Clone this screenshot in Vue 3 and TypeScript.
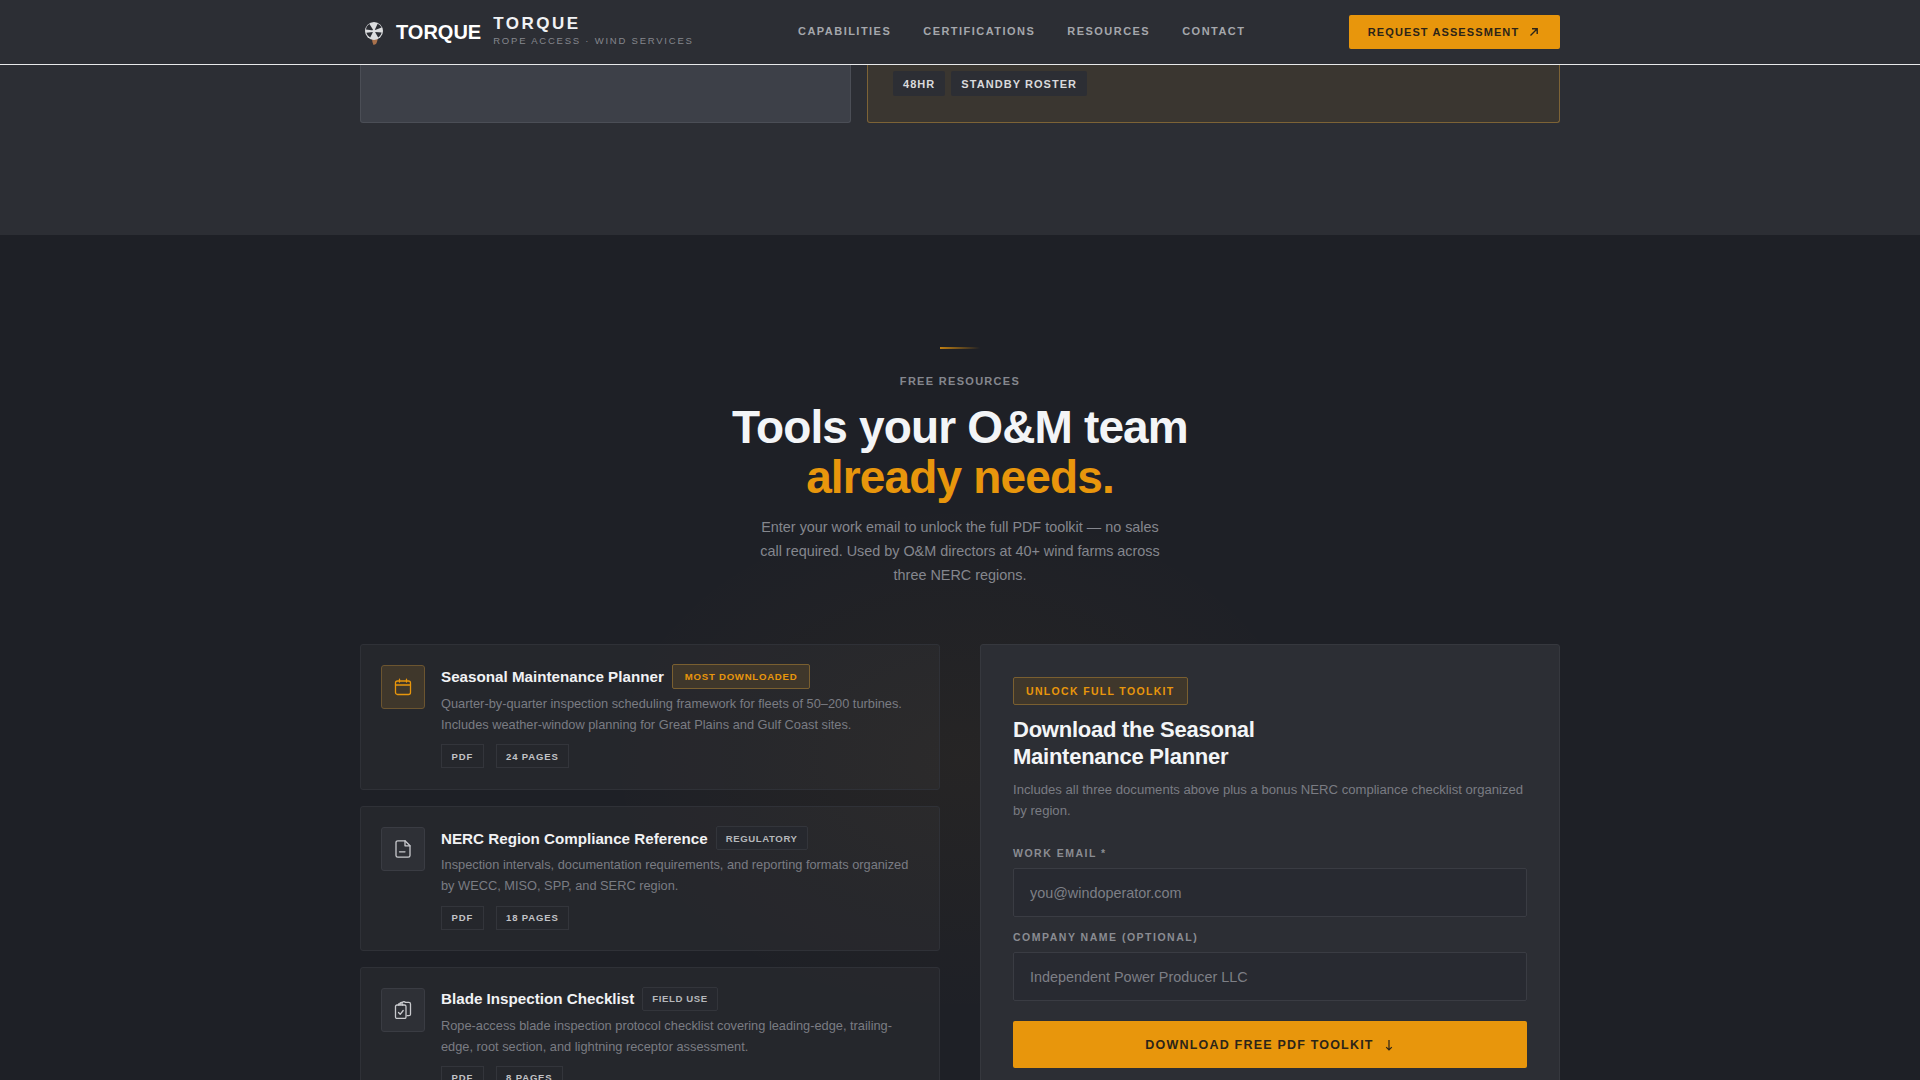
<script setup lang="ts">
interface Resource {
  title: string
  badge: string
  featured?: boolean
  icon: 'calendar' | 'file' | 'clipboard'
  desc: string
  pages: string
}

const navLinks = ['Capabilities', 'Certifications', 'Resources', 'Contact']

const resources: Resource[] = [
  {
    title: 'Seasonal Maintenance Planner',
    badge: 'Most Downloaded',
    featured: true,
    icon: 'calendar',
    desc: 'Quarter-by-quarter inspection scheduling framework for fleets of 50–200 turbines. Includes weather-window planning for Great Plains and Gulf Coast sites.',
    pages: '24 Pages',
  },
  {
    title: 'NERC Region Compliance Reference',
    badge: 'Regulatory',
    icon: 'file',
    desc: 'Inspection intervals, documentation requirements, and reporting formats organized by WECC, MISO, SPP, and SERC region.',
    pages: '18 Pages',
  },
  {
    title: 'Blade Inspection Checklist',
    badge: 'Field Use',
    icon: 'clipboard',
    desc: 'Rope-access blade inspection protocol checklist covering leading-edge, trailing-edge, root section, and lightning receptor assessment.',
    pages: '8 Pages',
  },
]
</script>

<template>
  <div class="page">
    <header class="header">
      <div class="container header-row">
        <div class="brand">
          <svg class="brand-mark" width="20" height="26" viewBox="0 0 20 26">
            <path d="M8 18c0 3 .6 5 1.6 7l2.4-1c1.2-2 1.6-4 1.6-6z" fill="#a8714c" />
            <circle cx="10" cy="11" r="9" fill="#dcdddf" />
            <path d="M9.6 10.4 5.4 4C3.6 5 2.2 7 2 9.4ZM10.6 10.2 17.6 7.6C16.8 6 15.4 4.6 13.6 3.8ZM11 12l6.6.6c-.4 2-1.6 3.8-3.4 4.8ZM9 12l-6.6.8c.6 2 2 3.6 3.8 4.6Z" fill="#2b2d33" />
            <circle cx="10" cy="11" r="1.7" fill="#dcdddf" />
          </svg>
          <span class="brand-alt">TORQUE</span>
          <div class="brand-text">
            <div class="brand-name">TORQUE</div>
            <div class="brand-sub">Rope Access · Wind Services</div>
          </div>
        </div>
        <nav class="nav">
          <a v-for="link in navLinks" :key="link">{{ link }}</a>
        </nav>
        <button type="button" class="cta">
          Request Assessment
          <svg width="10" height="10" viewBox="0 0 10 10" fill="none" stroke="currentColor" stroke-width="1.4">
            <path d="M1.5 8.5 8 2M3 1.8h5.2V7" />
          </svg>
        </button>
      </div>
    </header>

    <section class="upper">
      <div class="container upper-row">
        <div class="upper-card"></div>
        <div class="upper-card upper-card-amber">
          <span class="chip">48HR</span>
          <span class="chip">Standby Roster</span>
        </div>
      </div>
    </section>

    <section class="resources">
      <div class="container">
        <div class="intro">
          <div class="rule"></div>
          <div class="eyebrow">Free Resources</div>
          <h2>Tools your O&amp;M team <span>already needs.</span></h2>
          <p>Enter your work email to unlock the full PDF toolkit — no sales call required. Used by O&amp;M directors at 40+ wind farms across three NERC regions.</p>
        </div>

        <div class="grid">
          <div class="list">
            <article v-for="item in resources" :key="item.title" class="card">
              <div class="icon" :class="{ 'icon-amber': item.featured }">
                <svg width="18" height="18" viewBox="0 0 18 18" fill="none" stroke="currentColor" stroke-width="1.3" stroke-linecap="round" stroke-linejoin="round">
                  <template v-if="item.icon === 'calendar'">
                    <rect x="1.5" y="3" width="15" height="13.5" rx="2" />
                    <path d="M1.5 7h15M5.5 1.2V4M12.5 1.2V4" />
                  </template>
                  <template v-else-if="item.icon === 'file'">
                    <path d="M3.8.8h7.2l5 5v9.6a1.8 1.8 0 0 1-1.8 1.8H3.8A1.8 1.8 0 0 1 2 15.400V2.600A1.800 1.800 0 0 1 3.800.8Z" />
                    <path d="M11 .8v5h5M5.500 11.800h5.500" />
                  </template>
                  <template v-else>
                    <path d="M6 3.500V2.600C6 1.800 6.600 1.400 7.400 1.400H8.500C9 .4 10.800.4 11.300 1.400h3.500c1 0 1.700.6 1.700 1.600v10.200c0 1-.7 1.500-1.700 1.500H13" />
                    <rect x="1.500" y="4" width="10.500" height="13.500" rx="1.500" />
                    <path d="M4.500 11.500l1.700 1.800 3-3.800M4.600 4V2.900h4v1.100" />
                  </template>
                </svg>
              </div>
              <div class="card-body">
                <div class="card-head">
                  <h3>{{ item.title }}</h3>
                  <span class="badge" :class="{ 'badge-amber': item.featured }">{{ item.badge }}</span>
                </div>
                <p>{{ item.desc }}</p>
                <div class="meta">
                  <span>PDF</span>
                  <span>{{ item.pages }}</span>
                </div>
              </div>
            </article>
          </div>

          <form class="panel" @submit.prevent>
            <span class="unlock">Unlock Full Toolkit</span>
            <h3>Download the Seasonal Maintenance Planner</h3>
            <p>Includes all three documents above plus a bonus NERC compliance checklist organized by region.</p>
            <label for="email">Work Email *</label>
            <input id="email" type="email" placeholder="you@windoperator.com" />
            <label for="company">Company Name (Optional)</label>
            <input id="company" type="text" placeholder="Independent Power Producer LLC" />
            <button type="submit" class="download">
              Download Free PDF Toolkit
              <svg width="12" height="14" viewBox="0 0 12 14" fill="none" stroke="currentColor" stroke-width="1.2">
                <path d="M6 2v10M3.2 9.2 6 12l2.8-2.8" />
              </svg>
            </button>
          </form>
        </div>
      </div>
    </section>
  </div>
</template>

<style scoped>
.page {
  height: 1080px;
  overflow: hidden;
  font-family: "Liberation Sans", Arial, sans-serif;
  color: #f1f2f4;
  background: #2c2e34;
}

.container {
  width: 1200px;
  margin: 0 auto;
}

.header {
  height: 64px;
  background: #2c2e34;
  border-bottom: 1px solid #e8e9ea;
}

.header-row {
  height: 100%;
  display: flex;
  align-items: center;
}

.brand {
  display: flex;
  align-items: center;
  width: 438px;
  padding-left: 4px;
  box-sizing: border-box;
}

.brand-mark {
  margin-top: 2px;
}

.brand-alt {
  margin-left: 12px;
  font-size: 20px;
  font-weight: 700;
  color: #fff;
}

.brand-text {
  margin-left: 12px;
  margin-top: -3px;
}

.brand-name {
  margin-bottom: 1px;
  font-size: 17px;
  font-weight: 700;
  letter-spacing: 2.5px;
  line-height: 20px;
  color: #f1f2f4;
}

.brand-sub {
  font-size: 9.5px;
  letter-spacing: 1.78px;
  line-height: 12px;
  text-transform: uppercase;
  color: #85878d;
}

.nav {
  display: flex;
  gap: 32px;
  margin-top: -2px;
}

.nav a {
  font-size: 11px;
  font-weight: 700;
  letter-spacing: 1.47px;
  text-transform: uppercase;
  color: #a5a7ac;
}

.cta {
  margin-left: auto;
  height: 34px;
  width: 211px;
  padding: 0 2px 0 0;
  display: flex;
  align-items: center;
  justify-content: center;
  gap: 10px;
  border: none;
  border-radius: 2px;
  background: #e8960c;
  color: #2c2418;
  font-family: inherit;
  font-size: 11px;
  font-weight: 700;
  letter-spacing: 1.1px;
  text-transform: uppercase;
}

.upper {
  height: 170px;
}

.upper-row {
  display: grid;
  grid-template-columns: 491px 693px;
  gap: 16px;
}

.upper-card {
  height: 58px;
  box-sizing: border-box;
  background: #3d4048;
  border: 1px solid #4b4e56;
  border-top: none;
  border-radius: 0 0 3px 3px;
}

.upper-card-amber {
  display: flex;
  gap: 6px;
  padding: 6px 25px 0;
  background: #3a3630;
  border-color: #7d6336;
}

.chip {
  height: 25px;
  padding: 0 10px;
  display: flex;
  align-items: center;
  background: #2c2e34;
  border-radius: 2px;
  font-size: 11px;
  font-weight: 700;
  letter-spacing: 1.05px;
  text-transform: uppercase;
  color: #d9dadc;
}

.resources {
  height: 845px;
  padding-top: 112px;
  box-sizing: border-box;
  background:
    radial-gradient(ellipse 360px 260px at 50% 62%, rgba(232, 150, 12, 0.04), transparent 100%),
    #1e2026;
}

.intro {
  display: flex;
  flex-direction: column;
  align-items: center;
  text-align: center;
}

.rule {
  width: 40px;
  height: 2px;
  background: linear-gradient(90deg, rgba(232, 150, 12, 0.8), transparent);
}

.eyebrow {
  margin-top: 25px;
  font-size: 11px;
  font-weight: 700;
  letter-spacing: 1.3px;
  line-height: 14px;
  text-transform: uppercase;
  color: #85878e;
}

.intro h2 {
  margin: 14px 0 0;
  width: 600px;
  font-size: 46px;
  font-weight: 700;
  letter-spacing: -0.85px;
  line-height: 50px;
  color: #f3f5f7;
}

.intro h2 span {
  display: block;
  color: #e8960c;
}

.intro p {
  margin: 13px 0 0;
  width: 420px;
  font-size: 14.4px;
  line-height: 24px;
  color: #85878e;
}

.grid {
  margin-top: 57px;
  display: grid;
  grid-template-columns: 580px 580px;
  gap: 40px;
}

.list {
  display: flex;
  flex-direction: column;
  gap: 16px;
}

.card {
  display: flex;
  gap: 16px;
  padding: 20px;
  background: rgba(255, 255, 255, 0.03);
  border: 1px solid #2f3137;
  border-radius: 3px;
}

.card:first-child {
  padding-bottom: 21px;
}

.icon {
  flex: none;
  width: 44px;
  height: 44px;
  display: flex;
  align-items: center;
  justify-content: center;
  box-sizing: border-box;
  background: #2e3036;
  border: 1px solid #3a3c43;
  border-radius: 3px;
  color: #c9cace;
}

.icon-amber {
  background: #3f372b;
  border-color: #6c5530;
  color: #e8960c;
}

.card-body {
  flex: 1;
}

.card-head {
  margin-top: -1px;
  display: flex;
  align-items: center;
  gap: 8px;
}

.card-head h3 {
  margin: 0;
  font-size: 15.2px;
  font-weight: 700;
  color: #f1f2f4;
}

.badge {
  height: 24px;
  padding: 0 9px;
  display: flex;
  align-items: center;
  box-sizing: border-box;
  background: #26282e;
  border: 1px solid #33353b;
  border-radius: 2px;
  font-size: 9.6px;
  font-weight: 700;
  letter-spacing: 0.6px;
  text-transform: uppercase;
  color: #b5b7bb;
}

.badge-amber {
  height: 25px;
  padding: 0 12px;
  letter-spacing: 0.75px;
  background: #3f372b;
  border-color: #7a5f30;
  color: #e8960c;
}

.card-body p {
  margin: 4px 0 0;
  font-size: 12.8px;
  line-height: 21.12px;
  color: #7a7c83;
}

.meta {
  margin-top: 9px;
  display: flex;
  gap: 12px;
}

.meta span {
  height: 24px;
  padding: 0 9.5px;
  display: flex;
  align-items: center;
  box-sizing: border-box;
  border: 1px solid #33353b;
  font-size: 9.5px;
  font-weight: 700;
  letter-spacing: 0.85px;
  text-transform: uppercase;
  color: #c2c3c7;
}

.panel {
  padding: 32px;
  display: flex;
  flex-direction: column;
  align-items: flex-start;
  height: 600px;
  box-sizing: border-box;
  background: #2c2e34;
  border: 1px solid #36383e;
  border-radius: 3px;
}

.unlock {
  height: 28px;
  padding: 0 12px;
  display: flex;
  align-items: center;
  box-sizing: border-box;
  background: #3f372b;
  border: 1px solid #7a5f30;
  border-radius: 2px;
  font-size: 10.5px;
  font-weight: 700;
  letter-spacing: 1.33px;
  text-transform: uppercase;
  color: #e8960c;
}

.panel h3 {
  margin: 11px 0 0;
  width: 300px;
  font-size: 22px;
  font-weight: 700;
  letter-spacing: -0.25px;
  line-height: 27px;
  color: #f3f5f7;
}

.panel p {
  margin: 9px 0 0;
  font-size: 13.12px;
  line-height: 21px;
  color: #7a7c83;
}

.panel label {
  margin: 13px 0 8px;
  font-size: 10.5px;
  font-weight: 700;
  letter-spacing: 1.5px;
  line-height: 14px;
  text-transform: uppercase;
  color: #8a8c92;
}

.panel p + label {
  margin-top: 25px;
}

.panel input {
  width: 100%;
  height: 49px;
  padding: 0 16px;
  box-sizing: border-box;
  background: #282a31;
  border: 1px solid #3a3c43;
  border-radius: 2px;
  outline: none;
  font-family: inherit;
  font-size: 14.4px;
  color: #f1f2f4;
}

.panel input::placeholder {
  color: #7d7f86;
}

.download {
  margin-top: 20px;
  width: 100%;
  height: 47px;
  display: flex;
  align-items: center;
  justify-content: center;
  gap: 9px;
  border: none;
  border-radius: 2px;
  background: #e8960c;
  color: #2c2418;
  font-family: inherit;
  font-size: 12.5px;
  font-weight: 700;
  letter-spacing: 1.2px;
  text-transform: uppercase;
}
</style>

<style>
html,
body {
  background: #1e2026;
  overflow: hidden;
}
</style>
